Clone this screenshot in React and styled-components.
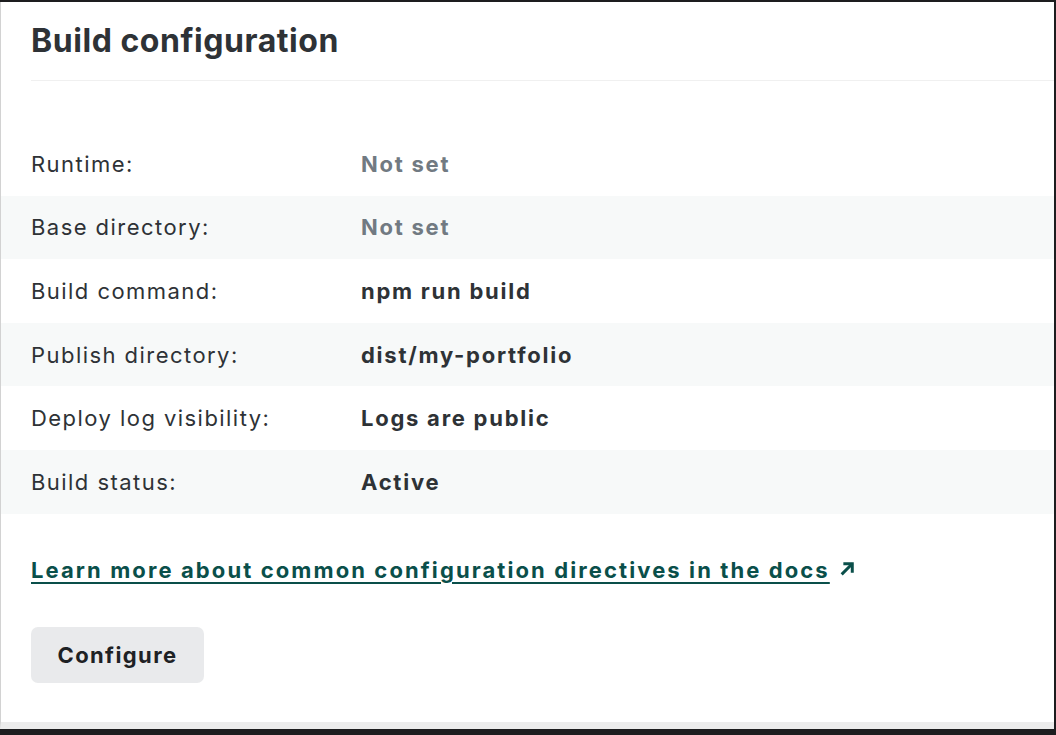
import React from "react";
import styled, { createGlobalStyle } from "styled-components";

const Global = createGlobalStyle`
  html, body { margin: 0; padding: 0; background: #1d1d1f; }
  body { font-family: Inter, "Noto Sans", "Liberation Sans", sans-serif; -webkit-font-smoothing: antialiased; }
  * { box-sizing: border-box; }
`;

const Page = styled.div`
  width: 1056px;
  height: 735px;
  padding: 2px 2px 0 0;
  background: #1d1d1f;
`;

const Card = styled.section`
  height: 727px;
  background: #ffffff;
  border-left: 1px solid #d2d2d2;
  border-bottom: 7px solid #ececec;
  display: flex;
  flex-direction: column;
`;

const Header = styled.header`
  margin-left: 30px;
  height: 79px;
  border-bottom: 1px solid #f0f0f0;
  display: flex;
  align-items: flex-start;
`;

const Title = styled.h2`
  margin: 19px 0 0;
  font-size: 32px;
  line-height: 40px;
  font-weight: 700;
  color: #2e3236;
  letter-spacing: 0.55px;
`;

const Rows = styled.dl`
  margin: 51px 0 0;
  padding: 0;
`;

const Row = styled.div`
  display: grid;
  grid-template-columns: 330px 1fr;
  align-items: center;
  height: 63.6px;
  padding-left: 30px;
  background: ${(p) => (p.$striped ? "#f7f9f9" : "transparent")};
`;

const Label = styled.dt`
  font-size: 22px;
  font-weight: 400;
  letter-spacing: 1.45px;
  color: #2e3236;
`;

const Value = styled.dd`
  margin: 0;
  font-size: 22px;
  font-weight: 700;
  letter-spacing: 1.75px;
  color: ${(p) => (p.$muted ? "#717a82" : "#2e3236")};
`;

const Footer = styled.div`
  padding: 41px 0 0 30px;
  display: flex;
  flex-direction: column;
  align-items: flex-start;
  gap: 42px;
`;

const DocLink = styled.a`
  display: inline-flex;
  align-items: center;
  gap: 9px;
  font-size: 22px;
  font-weight: 700;
  letter-spacing: 2.1px;
  color: #0a4f4a;
  text-decoration: none;
  line-height: 30px;
`;

const LinkText = styled.span`
  text-decoration: underline;
  text-decoration-thickness: 2px;
  text-underline-offset: 4px;
`;

const Arrow = styled.svg`
  width: 17px;
  height: 17px;
  margin-top: -3px;
`;

const Button = styled.button`
  height: 56px;
  width: 173px;
  border: none;
  border-radius: 7px;
  background: #e9eaec;
  color: #1e2124;
  font-family: inherit;
  font-size: 22px;
  font-weight: 700;
  letter-spacing: 1.4px;
  cursor: pointer;
`;

const rows = [
  { label: "Runtime:", value: "Not set", muted: true },
  { label: "Base directory:", value: "Not set", muted: true },
  { label: "Build command:", value: "npm run build" },
  { label: "Publish directory:", value: "dist/my-portfolio" },
  { label: "Deploy log visibility:", value: "Logs are public" },
  { label: "Build status:", value: "Active" },
];

export default function App() {
  return (
    <>
      <Global />
      <Page>
        <Card>
          <Header>
            <Title>Build configuration</Title>
          </Header>
          <Rows>
            {rows.map((r, i) => (
              <Row key={r.label} $striped={i % 2 === 1}>
                <Label>{r.label}</Label>
                <Value $muted={r.muted}>{r.value}</Value>
              </Row>
            ))}
          </Rows>
          <Footer>
            <DocLink href="#">
              <LinkText>Learn more about common configuration directives in the docs</LinkText>
              <Arrow viewBox="0 0 16 16" fill="none" stroke="currentColor" strokeWidth="2.8" strokeLinecap="square">
                <path d="M3.5 12.5 L11.5 4.5" />
                <path d="M5.5 3.5 H12.5 V10.5" />
              </Arrow>
            </DocLink>
            <Button>Configure</Button>
          </Footer>
        </Card>
      </Page>
    </>
  );
}
